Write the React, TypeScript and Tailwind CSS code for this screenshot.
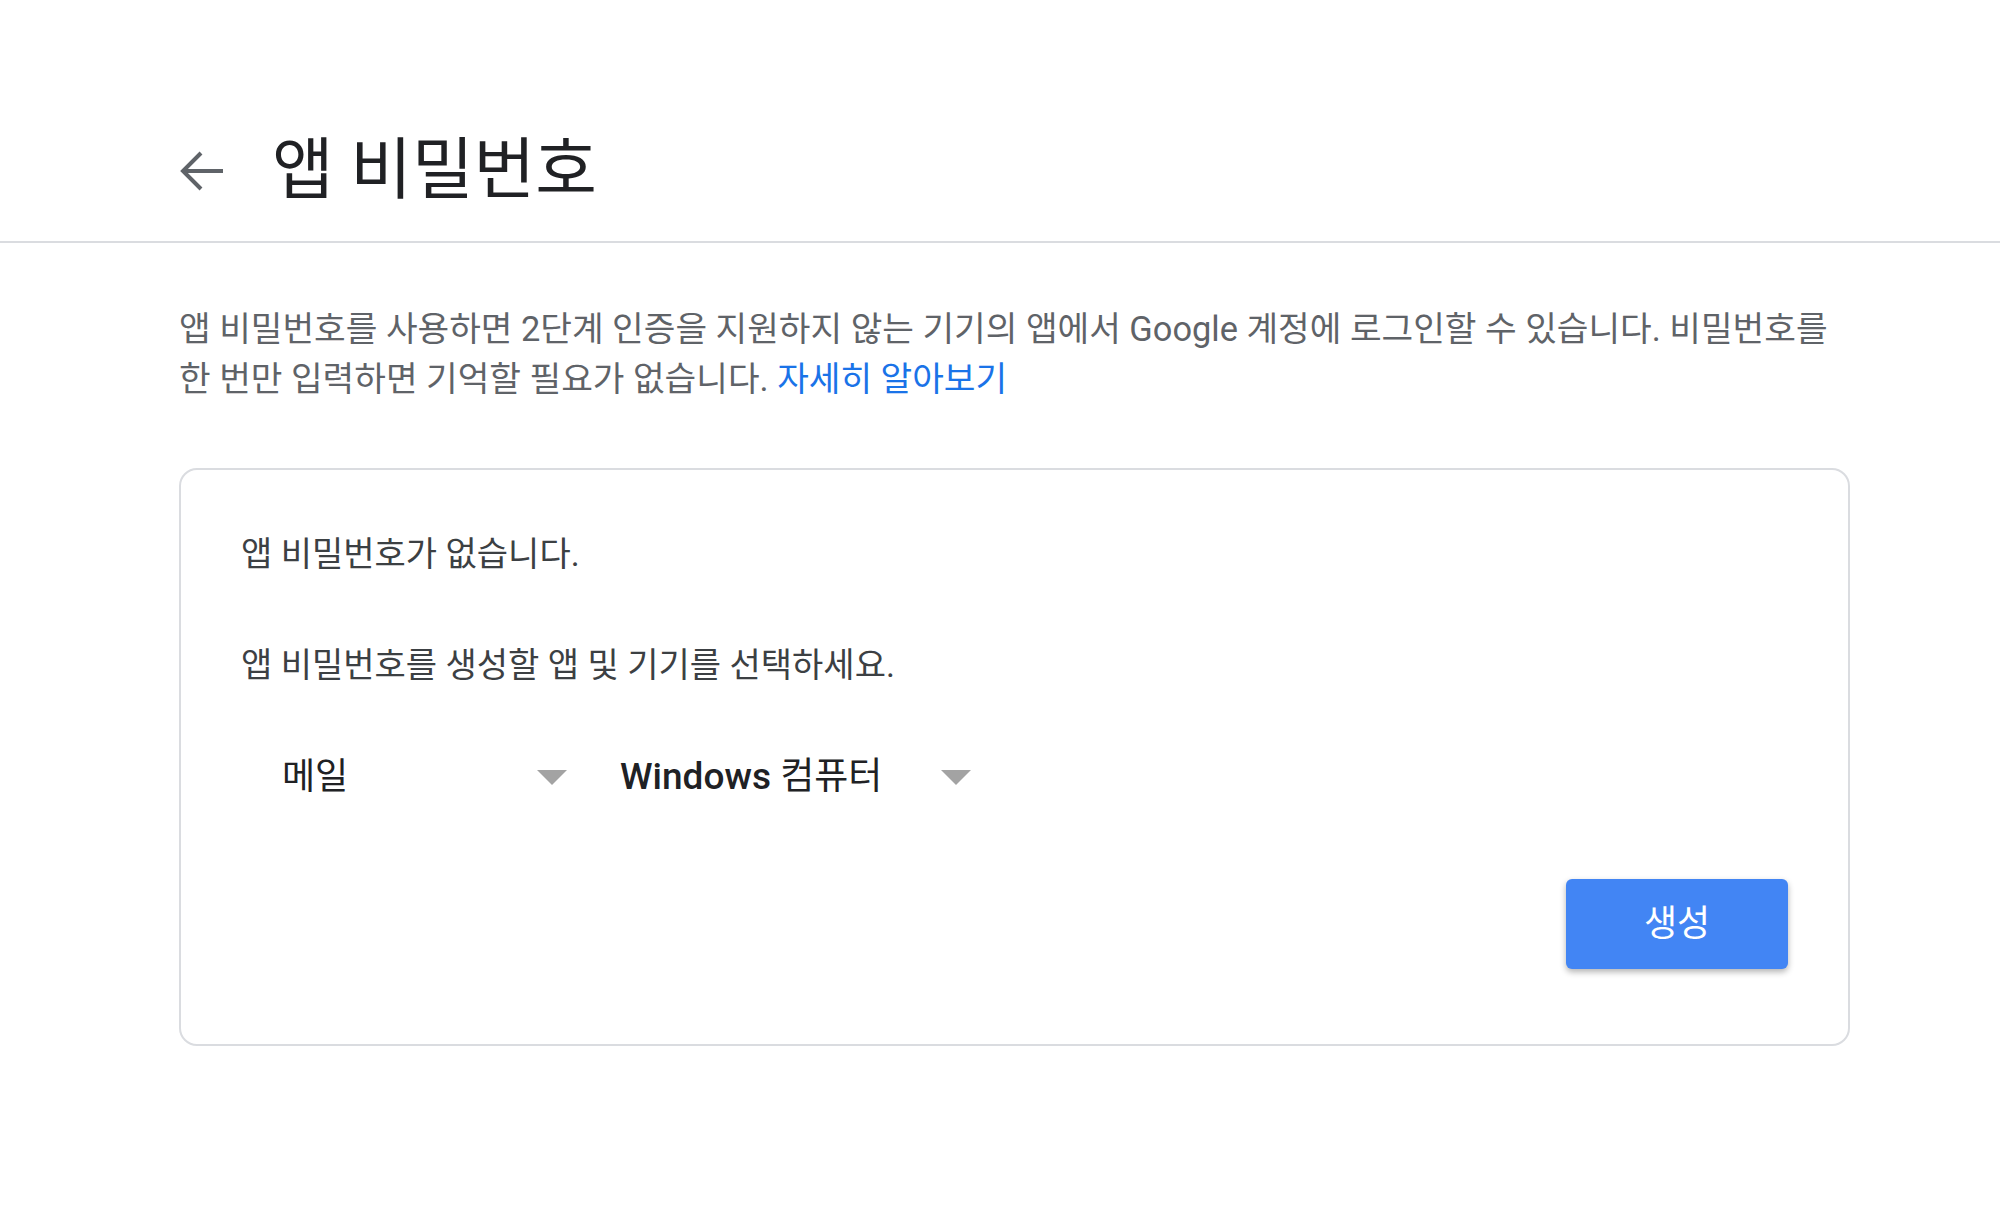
import React from "react";

function BackArrow() {
  return (
    <svg width="44" height="42" viewBox="0 0 44 42" fill="none" stroke="#5f6368" strokeWidth="4" strokeLinecap="butt" strokeLinejoin="miter">
      <path d="M44 21H4" />
      <path d="M22 3L4 21l18 18" />
    </svg>
  );
}

function Triangle() {
  return (
    <svg width="30" height="15" viewBox="0 0 30 15">
      <path d="M0 0h30L15 15z" fill="#a3a3a3" />
    </svg>
  );
}

export default function App() {
  return (
    <div className="min-h-[1212px] w-full bg-white font-['Roboto','Noto_Sans_CJK_KR',sans-serif]">
      <header className="flex h-[243px] items-center border-b-2 border-[#dadce0] pl-[179px] pt-[100px]">
        <BackArrow />
        <h1 className="ml-[49px] text-[67px] font-normal leading-none text-[#202124]">앱 비밀번호</h1>
      </header>

      <main className="pl-[179px]">
        <p className="mt-[61px] w-[1671px] text-[34.4px] leading-[50px] text-[#5f6368]">
          앱 비밀번호를 사용하면 2단계 인증을 지원하지 않는 기기의 앱에서 Google 계정에 로그인할 수 있습니다. 비밀번호를
          <br />
          한 번만 입력하면 기억할 필요가 없습니다.{" "}
          <a className="text-[#1a73e8]">자세히 알아보기</a>
        </p>

        <section className="mt-[64px] flex w-[1671px] flex-col rounded-[18px] border-2 border-[#dadce0] px-[60px] pb-[75px] pt-[60px]">
          <p className="text-[34px] leading-[48px] text-[#3c4043]">앱 비밀번호가 없습니다.</p>
          <p className="mt-[63px] text-[34px] leading-[48px] text-[#3c4043]">앱 비밀번호를 생성할 앱 및 기기를 선택하세요.</p>

          <div className="mt-[56px] flex h-[64px] items-center">
            <div className="flex h-full w-[339px] items-center justify-between pl-[41px] pr-[13px]">
              <span className="text-[36px] text-[#202124]">메일</span>
              <Triangle />
            </div>
            <div className="flex h-full w-[403px] items-center justify-between pl-[40px] pr-[12px]">
              <span className="text-[37px] text-[#202124]">
                <span className="font-medium">Windows</span> 컴퓨터
              </span>
              <Triangle />
            </div>
          </div>

          <div className="mt-[70px] flex justify-end">
            <button className="flex h-[90px] w-[222px] items-center justify-center rounded-[6px] bg-[#4285f4] text-[36px] text-white shadow-[0_3px_6px_rgba(0,0,0,0.3)]">
              생성
            </button>
          </div>
        </section>
      </main>
    </div>
  );
}
